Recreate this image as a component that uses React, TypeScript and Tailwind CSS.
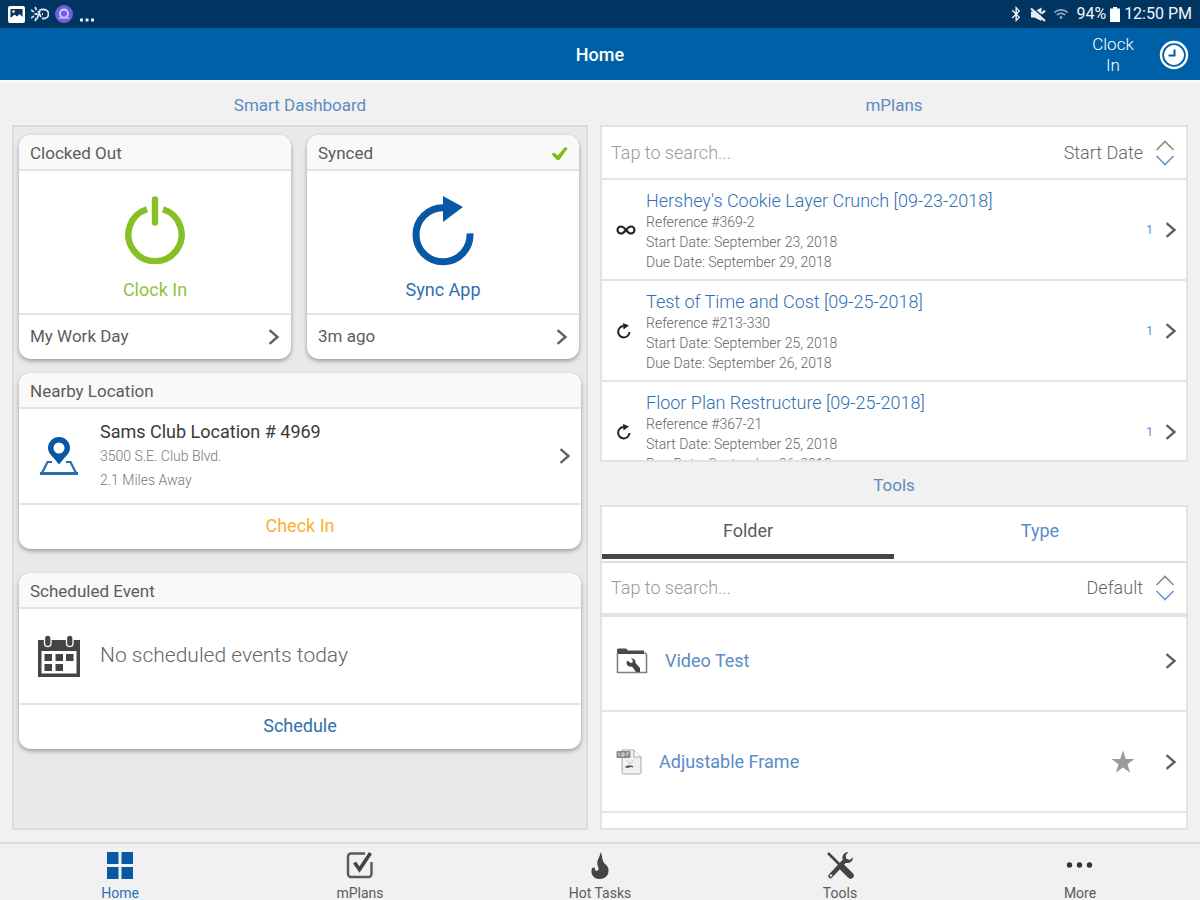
import type { ReactNode } from 'react';
import { FaBluetoothB, FaWifi } from 'react-icons/fa';

const plans = [
  { title: "Hershey's Cookie Layer Crunch [09-23-2018]", ref: '#369-2', start: 'September 23, 2018', due: 'September 29, 2018', count: 1, endless: true },
  { title: 'Test of Time and Cost [09-25-2018]', ref: '#213-330', start: 'September 25, 2018', due: 'September 26, 2018', count: 1, endless: false },
  { title: 'Floor Plan Restructure [09-25-2018]', ref: '#367-21', start: 'September 25, 2018', due: 'September 26, 2018', count: 1, endless: false },
];

function Chevron() {
  return (
    <svg width="12" height="16" viewBox="0 0 12 16" fill="none" stroke="#606060" strokeWidth="2.4" className="shrink-0" aria-hidden="true">
      <path d="M1.5 1.200L9.500 8L1.5 14.800" />
    </svg>
  );
}

function SortIcon() {
  return (
    <svg width="20" height="26" viewBox="0 0 20 26" fill="none" strokeWidth="1.6" className="shrink-0" aria-hidden="true">
      <path d="M1.5 10L10 1.5L18.5 10" stroke="#8a8a8a" />
      <path d="M1.5 16L10 24.5L18.5 16" stroke="#6f97cc" />
    </svg>
  );
}

function CheckIcon() {
  return (
    <svg width="17" height="15" viewBox="0 0 17 15" fill="#80bb1c" aria-hidden="true">
      <path d="M0.500 8.200L3 6.600L6.800 9.500L14 1L16.800 2.200L8.200 14H6Z" />
    </svg>
  );
}

function PowerIcon() {
  return (
    <svg width="60" height="70" viewBox="0 0 60 70" fill="none" stroke="#86bf26" strokeWidth="6.4" aria-hidden="true">
      <path d="M22 13.2A26.6 26.6 0 1 0 38 13.2" />
      <path d="M30 3.4V26.6" strokeLinecap="round" />
    </svg>
  );
}

function SyncIcon() {
  return (
    <svg width="62" height="70" viewBox="0 0 62 70" aria-hidden="true">
      <path d="M31.5 11.8A27 27 0 1 0 58 37.4" fill="none" stroke="#0759a5" strokeWidth="7" />
      <path d="M31 0L51 11L31 26Z" fill="#0759a5" />
    </svg>
  );
}

function PinIcon() {
  return (
    <svg width="40" height="40" viewBox="0 0 40 40" aria-hidden="true">
      <path d="M20 1a11 11 0 0 0-11 11c0 5 3.500 7.500 6.500 11l4.500 5.500l4.500-5.500c3-3.500 6.500-6 6.500-11a11 11 0 0 0-11-11zm0 5.500a5.500 5.500 0 1 1 0 11a5.500 5.500 0 0 1 0-11z" fill="#0759a5" fillRule="evenodd" />
      <path d="M13 26H8.500L3 37H37L31.500 26H27" fill="none" stroke="#2a6cb0" strokeWidth="2.200" />
      <path d="M1 37.500H39" stroke="#2a6cb0" strokeWidth="3" />
    </svg>
  );
}

function CalendarIcon() {
  return (
    <svg width="44" height="44" viewBox="0 0 44 44" aria-hidden="true">
      <path d="M1 6H43V43H1ZM4.500 17V39.500H39.500V17Z" fill="#444" fillRule="evenodd" />
      <rect x="7.500" y="1" width="6.500" height="11.500" rx="3.200" fill="#444" stroke="#fff" strokeWidth="1.300" />
      <rect x="29.500" y="1" width="6.500" height="11.500" rx="3.200" fill="#444" stroke="#fff" strokeWidth="1.300" />
      <path d="M7.500 20h7.500v7h-7.500zM18.500 20h7.500v7h-7.500zM29 20h7.500v7h-7.500zM7.500 30h7.500v7h-7.500zM18.500 30h7.500v7h-7.500z" fill="#444" />
    </svg>
  );
}

function InfinityIcon() {
  return (
    <svg width="20" height="10" viewBox="0 0 20 10" fill="none" stroke="#222" strokeWidth="2.100" aria-hidden="true">
      <path d="M10 5C8 2.400 7 1.500 5 1.500a3.500 3.500 0 0 0 0 7C7 8.500 8 7.600 10 5C12 2.400 13 1.500 15 1.500a3.500 3.500 0 0 1 0 7C13 8.500 12 7.600 10 5Z" />
    </svg>
  );
}

function RepeatIcon() {
  return (
    <svg width="16" height="16" viewBox="0 0 16 16" aria-hidden="true">
      <path d="M7.500 3A5.700 5.700 0 1 0 13.500 9" fill="none" stroke="#222" strokeWidth="2" />
      <path d="M7 0L13 2.500L7.500 6.500Z" fill="#222" />
    </svg>
  );
}

function FolderIcon() {
  return (
    <svg width="32" height="26" viewBox="0 0 32 26" aria-hidden="true">
      <path d="M1 2a1.500 1.500 0 0 1 1.500-1.500H10L12 2.500H28V6H1Z" fill="#4a4a4a" />
      <path d="M1.500 5V24.500H30.500V6.500L28.500 4.500" fill="none" stroke="#808080" strokeWidth="1.600" />
      <path d="M11.500 12.500l3 2.500l2-.5l.3-2.500l-2-1.500c3-.5 5.200 1.500 4.700 4.500L24 20v4h-4l-4-5.500c-2.800 1-5.500-1-5.500-4z" fill="#444" />
    </svg>
  );
}

function FileIcon() {
  return (
    <svg width="26" height="26" viewBox="0 0 26 26" aria-hidden="true">
      <path d="M6 1H18L25 8V23.500a1.500 1.500 0 0 1-1.500 1.500H7.500A1.500 1.500 0 0 1 6 23.500Z" fill="#f0f0f0" stroke="#a8a8a8" />
      <path d="M18 1V8H25" fill="#fff" stroke="#a8a8a8" />
      <rect x="0.500" y="2" width="14" height="7" rx="1" fill="#8b8b8b" />
      <path d="M3 4v3M6 4h2v3h-2zM11 7V4h2" stroke="#ddd" strokeWidth="1" fill="none" />
      <path d="M9 18.500c1-2.500 5-3 8-1.500v1.500c-2-1-3.500-.5-4 .5z" fill="#555" />
      <path d="M11.500 11.500l2.500 3.500l3.500-4" fill="none" stroke="#c4c4c4" />
    </svg>
  );
}

function StarIcon() {
  return (
    <svg width="24" height="24" viewBox="0 0 24 24" fill="#9b9b9b" aria-hidden="true">
      <path d="M12 0.500L14.800 9H23.500L16.500 14.200L19.200 22.800L12 17.500L4.800 22.800L7.500 14.200L0.500 9H9.200Z" />
    </svg>
  );
}

function Card({ title, badge, children, footer }: { title: string; badge?: ReactNode; children: ReactNode; footer: ReactNode }) {
  return (
    <section className="flex flex-col overflow-hidden rounded-xl bg-white shadow-[0_2px_4px_rgba(0,0,0,0.35)]">
      <h3 className="flex h-9 items-center justify-between border-b-2 border-[#e4e4e4] bg-[#f9f9f9] px-[11px] pt-[3px] text-[17px] text-[#5c5c5c]">
        {title}
        {badge}
      </h3>
      {children}
      <div className="flex h-[46px] border-t-2 border-[#e4e4e4]">{footer}</div>
    </section>
  );
}

function PanelTitle({ children }: { children: ReactNode }) {
  return <h2 className="flex h-[42px] shrink-0 items-center justify-center pt-[3px] text-[17px] text-[#5e8bc0]">{children}</h2>;
}

function SearchBar({ label, option }: { label: string; option: string }) {
  return (
    <div className="flex h-[50px] shrink-0 items-center pr-[11px] pl-[9px]">
      <input type="search" aria-label={label} placeholder="Tap to search..." className="min-w-0 flex-1 text-lg font-light outline-none placeholder:text-[#9a9a9a]" />
      <label className="flex items-center gap-3">
        <select aria-label={`${label} order`} className="appearance-none text-lg font-light text-[#666] outline-none [field-sizing:content]">
          <option>{option}</option>
        </select>
        <SortIcon />
      </label>
    </div>
  );
}

function StatusBar() {
  return (
    <div className="flex h-7 shrink-0 items-center justify-between bg-[#003562] px-2 text-white">
      <div className="flex items-center gap-[6px]">
        <svg width="17" height="17" viewBox="0 0 17 17" aria-hidden="true">
          <rect width="17" height="17" rx="2" fill="#fff" />
          <path d="M2.500 3H14.500V11L11.500 8L9 10.500L6.500 8.500L2.500 12Z" fill="#0b3156" />
          <circle cx="5.500" cy="5.500" r="1.300" fill="#fff" />
        </svg>
        <svg width="18" height="16" viewBox="0 0 18 16" fill="none" stroke="#d9e3ee" strokeWidth="1.800" aria-hidden="true">
          <path d="M0 4l3 2M0 12l3-2M4 1l1.500 3M4 15l1.500-3M3.500 8h3M7 5l3 6M9.500 3l-3.500 10M10 3.500h3a4.500 4.500 0 0 1 0 9h-2M11 8h1" />
        </svg>
        <svg width="18" height="18" viewBox="0 0 18 18" aria-hidden="true">
          <circle cx="9" cy="9" r="9" fill="#6f5fe0" />
          <circle cx="9" cy="8.500" r="4" fill="none" stroke="#cfd0ff" strokeWidth="1.800" />
          <path d="M3.500 13h11" stroke="#b9b5fa" strokeWidth="1.500" />
        </svg>
        <svg width="16" height="18" viewBox="0 0 16 18" fill="#e4ebf2" aria-hidden="true">
          <path d="M1 13.500h3v3H1zM6.500 13.500h3v3h-3zM12 13.500h3v3h-3z" />
        </svg>
      </div>
      <div className="flex items-center gap-1 text-[#f2f6fa]">
        <FaBluetoothB size={16} className="mr-[2px]" />
        <svg width="16" height="15" viewBox="0 0 16 15" className="mr-1" aria-hidden="true">
          <path d="M1 4.500H4.500L11.500 0.500V14L4.500 10.500H1Z" fill="#e9eff5" />
          <path d="M2.500 0.500L16 12.500" stroke="#003562" strokeWidth="1.600" />
          <path d="M1 1.500L15 14" stroke="#e9eff5" strokeWidth="2.200" />
          <path d="M12 6.500L15 3.500" stroke="#e9eff5" strokeWidth="2" />
        </svg>
        <FaWifi size={14} className="mr-1 text-[#8fa6bd]" />
        <span>94%</span>
        <svg width="10" height="15" viewBox="0 0 10 15" fill="#fff" aria-hidden="true">
          <path d="M3 0H7V1.500H10V15H0V1.500H3Z" />
        </svg>
        <span>12:50 PM</span>
      </div>
    </div>
  );
}

function Header() {
  return (
    <header className="grid h-[55px] shrink-0 grid-cols-3 items-center border-b-3 border-[#f8f9fc] bg-[#0060a7] pt-[2px] text-white">
      <h1 className="col-start-2 text-center text-lg font-medium">Home</h1>
      <button type="button" className="flex items-center gap-[22px] justify-self-end pr-[11px] text-[17px] leading-[21px] font-light">
        <span className="w-12 text-center">Clock In</span>
        <svg width="30" height="30" viewBox="0 0 30 30" fill="none" stroke="#fff" aria-hidden="true">
          <circle cx="15" cy="15" r="13" strokeWidth="2.400" />
          <circle cx="15" cy="15" r="9.500" fill="#fff" strokeWidth="1" />
          <path d="M15.500 9.500V15.500H9.500" stroke="#0060a7" strokeWidth="2" />
        </svg>
      </button>
    </header>
  );
}

function Dashboard() {
  return (
    <section className="flex min-h-0 flex-col">
      <PanelTitle>Smart Dashboard</PanelTitle>
      <div className="min-h-0 flex-1 overflow-y-auto border-2 border-[#dcdcdc] bg-[#e9e9e9] px-[5px] py-2 [scrollbar-width:none]">
        <div className="mb-[14px] grid grid-cols-2 gap-4 pr-[2px]">
          <Card title="Clocked Out" footer={<a href="#" className="flex flex-1 items-center justify-between px-[11px] text-[17px] text-[#5c5c5c]">My Work Day<Chevron /></a>}>
            <button type="button" className="flex h-[142px] flex-col items-center justify-center gap-[10px] pt-4 text-lg text-[#8fc43c]">
              <PowerIcon />
              Clock In
            </button>
          </Card>
          <Card title="Synced" badge={<CheckIcon />} footer={<a href="#" className="flex flex-1 items-center justify-between px-[11px] text-[17px] text-[#5c5c5c]">3m ago<Chevron /></a>}>
            <button type="button" className="flex h-[142px] flex-col items-center justify-center gap-[10px] pt-4 text-lg text-[#2f6fb2]">
              <SyncIcon />
              Sync App
            </button>
          </Card>
        </div>
        <div className="mb-6">
          <Card title="Nearby Location" footer={<button type="button" className="flex-1 pb-[2px] text-lg text-[#f7b035]">Check In</button>}>
            <a href="#" className="flex h-[94px] items-center pr-[10px] pl-5">
              <PinIcon />
              <div className="ml-[21px] flex-1">
                <p className="text-lg leading-6 text-[#3a3a3a]">Sams Club Location # 4969</p>
                <p className="text-sm leading-6 font-light text-[#777]">3500 S.E. Club Blvd.</p>
                <p className="text-sm leading-6 font-light text-[#777]">2.1 Miles Away</p>
              </div>
              <Chevron />
            </a>
          </Card>
        </div>
        <Card title="Scheduled Event" footer={<button type="button" className="flex-1 pb-[2px] text-lg text-[#2f6fb2]">Schedule</button>}>
          <div className="flex h-[94px] items-center gap-[19px] pl-[18px]">
            <CalendarIcon />
            <p className="text-[21px] font-light text-[#666]">No scheduled events today</p>
          </div>
        </Card>
      </div>
    </section>
  );
}

function Plans() {
  return (
    <section className="flex min-h-0 flex-[380] flex-col">
      <PanelTitle>mPlans</PanelTitle>
      <div className="flex min-h-0 flex-1 flex-col border-2 border-[#e2e2e2] bg-white pt-px">
        <SearchBar label="Search mPlans" option="Start Date" />
        <ul className="min-h-0 flex-1 overflow-y-auto border-t-2 border-[#e4e4e4] [scrollbar-width:none]">
          {plans.map((plan) => (
            <li key={plan.ref} className="border-b-2 border-[#e4e4e4]">
              <a href="#" className="flex items-center gap-3 pr-[9px] pl-[14px]">
                <div className="w-[18px]">{plan.endless ? <InfinityIcon /> : <RepeatIcon />}</div>
                <div className="flex-1 pt-[10px] pb-[7px] text-sm leading-5 font-light text-[#666]">
                  <p className="text-lg leading-[22px] text-[#2f6fb5]">{plan.title}</p>
                  <p>Reference {plan.ref}</p>
                  <p>Start Date: {plan.start}</p>
                  <p>Due Date: {plan.due}</p>
                </div>
                <span className="text-xs text-[#5a8cc6]">{plan.count}</span>
                <Chevron />
              </a>
            </li>
          ))}
        </ul>
      </div>
    </section>
  );
}

function Tools() {
  return (
    <section className="flex min-h-0 flex-[367] flex-col pt-px">
      <PanelTitle>Tools</PanelTitle>
      <div className="flex min-h-0 flex-1 flex-col border-2 border-[#e2e2e2] bg-white">
        <div role="tablist" className="grid h-14 shrink-0 grid-cols-2 border-b-2 border-[#dcdcdc] pb-[2px] text-lg">
          <button type="button" role="tab" aria-selected="true" className="border-b-5 border-[#474747] text-[#5c5c5c]">Folder</button>
          <button type="button" role="tab" aria-selected="false" className="border-b-5 border-transparent text-[#5a8cc6]">Type</button>
        </div>
        <SearchBar label="Search tools" option="Default" />
        <ul className="min-h-0 flex-1 overflow-y-auto border-t-4 border-[#e4e4e4] [scrollbar-width:none]">
          <li className="border-b-2 border-[#e4e4e4]">
            <a href="#" className="flex h-[93px] items-center gap-[17px] pr-[9px] pb-[6px] pl-[14px] text-lg text-[#5a8cc6]">
              <FolderIcon />
              <span className="flex-1">Video Test</span>
              <Chevron />
            </a>
          </li>
          <li className="flex items-center border-b-2 border-[#e4e4e4]">
            <a href="#" className="flex h-[99px] flex-1 items-center gap-[17px] pl-[14px] text-lg text-[#5a8cc6]">
              <FileIcon />
              <span>Adjustable Frame</span>
            </a>
            <button type="button" aria-label="Favorite" className="mr-[30px]">
              <StarIcon />
            </button>
            <a href="#" aria-label="Open Adjustable Frame" className="mr-[9px]">
              <Chevron />
            </a>
          </li>
        </ul>
      </div>
    </section>
  );
}

function NavItem({ label, active, children }: { label: string; active?: boolean; children: ReactNode }) {
  return (
    <a href="#" className={`flex flex-col items-center gap-[5px] pt-[5px] text-sm leading-[14px] ${active ? 'text-[#2f6fb2]' : 'text-[#5c5c5c]'}`}>
      {children}
      {label}
    </a>
  );
}

function BottomNav() {
  return (
    <nav className="grid h-[58px] shrink-0 grid-cols-5 border-t-2 border-[#dcdcdc] bg-[#f1f1f1]">
      <NavItem label="Home" active>
        <svg width="32" height="32" viewBox="0 0 32 32" fill="#0759a5" aria-hidden="true">
          <path d="M3 3h11.500v12H3zM17.500 3h11.500v12H17.500zM3 18h11.500v12H3zM17.500 18h11.500v12H17.500z" />
        </svg>
      </NavItem>
      <NavItem label="mPlans">
        <svg width="32" height="32" viewBox="0 0 32 32" fill="none" aria-hidden="true">
          <path d="M21 4.500H7a3 3 0 0 0-3 3V25a3 3 0 0 0 3 3H24.500a3 3 0 0 0 3-3V13" stroke="#5a5a5a" strokeWidth="2.400" />
          <path d="M10.500 13.500L15.500 20.500L26.500 4" stroke="#444" strokeWidth="3.600" />
        </svg>
      </NavItem>
      <NavItem label="Hot Tasks">
        <svg width="32" height="32" viewBox="0 0 32 32" fill="#444" aria-hidden="true">
          <path d="M16.500 3C16.500 8 11.500 11.500 14 17.500C14.800 19.300 15 21.500 13 21.800C11.200 22 10.500 20.500 10.700 18.500L8 19C6 25 9.500 30 15.500 30C21.500 30 25 26 24.500 20.500C24 16 20.500 15.500 19 12C17.700 9 18.500 6 16.500 3Z" />
        </svg>
      </NavItem>
      <NavItem label="Tools">
        <svg width="32" height="32" viewBox="0 0 32 32" aria-hidden="true">
          <path d="M4 4L17 17" stroke="#444" strokeWidth="2.600" />
          <path d="M18.500 18.500L26.500 26.500" stroke="#444" strokeWidth="6.500" strokeLinecap="round" />
          <path d="M6.500 27L21 11.500" stroke="#444" strokeWidth="4.500" strokeLinecap="round" />
          <path d="M24.500 3C20.500 3 18 6 18.500 10L22 14C26 14.500 29 12 29 8.500L25.500 11L22 9.500L21.800 6Z" fill="#444" />
          <circle cx="7" cy="26.500" r="1.300" fill="#ddd" />
        </svg>
      </NavItem>
      <NavItem label="More">
        <svg width="32" height="32" viewBox="0 0 32 32" fill="#333" aria-hidden="true">
          <circle cx="5.500" cy="16" r="2.700" />
          <circle cx="15.500" cy="16" r="2.700" />
          <circle cx="25.500" cy="16" r="2.700" />
        </svg>
      </NavItem>
    </nav>
  );
}

export default function App() {
  return (
    <div className="flex h-screen flex-col overflow-hidden bg-[#f1f1f1] font-[Roboto,sans-serif]">
      <StatusBar />
      <Header />
      <main className="grid min-h-0 flex-1 grid-cols-[48fr_49fr] gap-3 px-3 pb-3">
        <Dashboard />
        <div className="flex min-h-0 flex-col">
          <Plans />
          <Tools />
        </div>
      </main>
      <BottomNav />
    </div>
  );
}
